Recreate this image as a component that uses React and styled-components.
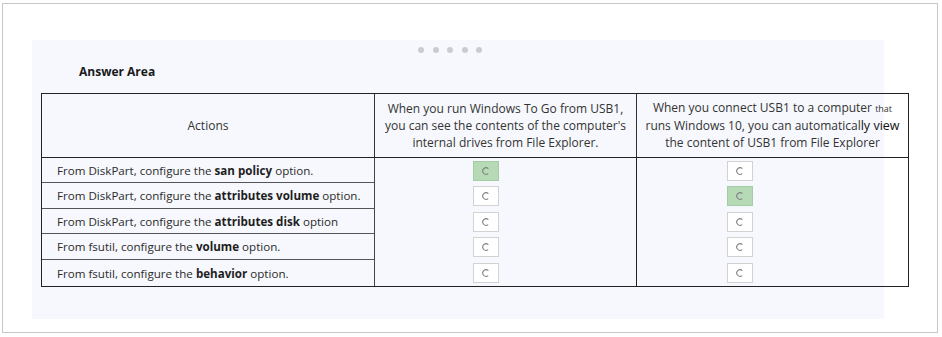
import React from 'react';
import styled, { createGlobalStyle } from 'styled-components';

const GlobalStyle = createGlobalStyle`
  html, body {
    margin: 0;
    padding: 0;
    background: #ffffff;
  }
  body {
    font-family: "Open Sans", "Noto Sans", Arial, sans-serif;
    color: #2b2b2b;
  }
`;

const rows = [
  { pre: 'From DiskPart, configure the ', bold: 'san policy', post: ' option.', pick: 0, h: 25 },
  { pre: 'From DiskPart, configure the ', bold: 'attributes volume', post: ' option.', pick: 1, h: 26 },
  { pre: 'From DiskPart, configure the ', bold: 'attributes disk', post: ' option', pick: -1, h: 25 },
  { pre: 'From fsutil, configure the ', bold: 'volume', post: ' option.', pick: -1, h: 26 },
  { pre: 'From fsutil, configure the ', bold: 'behavior', post: ' option.', pick: -1, h: 26 },
];

function App() {
  return (
    <>
      <GlobalStyle />
      <Frame>
        <Panel>
          <Dots>
            {[0, 1, 2, 3, 4].map((i) => <Dot key={i} />)}
          </Dots>
          <Title>Answer Area</Title>
          <Grid $rows={rows.map((r) => r.h + 'px').join(' ')}>
            <HeadCell>
              <HeadText>Actions</HeadText>
            </HeadCell>
            <HeadCell>
              <HeadText>
                When you run Windows To Go from USB1,<br />
                you can see the contents of the computer's<br />
                internal drives from File Explorer.
              </HeadText>
            </HeadCell>
            <HeadCell $last>
              <HeadText>
                When you connect USB1 to a computer <Tiny>that</Tiny><br />
                runs Windows 10, you can automatical<Heavy>ly view</Heavy><br />
                the content of USB1 from File Explorer
              </HeadText>
            </HeadCell>
            {rows.map((row, i) => (
              <React.Fragment key={i}>
                <ActionCell $last={i === rows.length - 1}>
                  <span>{row.pre}<b>{row.bold}</b>{row.post}</span>
                </ActionCell>
                <ChoiceCell $offset={98}>
                  <Choice $on={row.pick === 0}><RadioGlyph /></Choice>
                </ChoiceCell>
                <ChoiceCell $offset={90} $last>
                  <Choice $on={row.pick === 1}><RadioGlyph /></Choice>
                </ChoiceCell>
              </React.Fragment>
            ))}
          </Grid>
        </Panel>
      </Frame>
    </>
  );
}

function RadioGlyph() {
  return (
    <svg width="10" height="10" viewBox="0 0 10 10">
      <path d="M7.4 2.7 A3.3 3.3 0 1 0 7.2 7.6" fill="none" stroke="#808080" strokeWidth="1.1" />
    </svg>
  );
}

const Frame = styled.div`
  box-sizing: border-box;
  margin: 3px 0 0 2px;
  width: 936px;
  height: 330px;
  border: 1px solid #c8c8c8;
  padding: 36px 0 0 29px;
`;

const Panel = styled.div`
  width: 852px;
  height: 279px;
  background: #f6f8fd;
  padding-top: 7px;
  box-sizing: border-box;
  display: flex;
  flex-direction: column;
`;

const Dots = styled.div`
  display: flex;
  gap: 8.5px;
  padding-left: 386px;
  height: 6px;
`;

const Dot = styled.span`
  width: 6px;
  height: 6px;
  border-radius: 50%;
  background: #c9ccd3;
`;

const Title = styled.div`
  margin: 11px 0 0 47px;
  font-size: 12px;
  line-height: 16px;
  font-weight: 700;
  color: #1a1a1a;
`;

const Grid = styled.div`
  box-sizing: border-box;
  margin: 13px 0 0 9px;
  width: 868px;
  flex: none;
  border: 1px solid #222;
  display: grid;
  grid-template-columns: 333px 262px 271px;
  grid-template-rows: 64px ${(p) => p.$rows};
`;

const HeadCell = styled.div`
  box-sizing: border-box;
  display: flex;
  align-items: center;
  justify-content: center;
  border-bottom: 1px solid #222;
  border-right: ${(p) => (p.$last ? 'none' : '1px solid #333')};
  padding-bottom: 1px;
`;

const HeadText = styled.div`
  text-align: center;
  font-size: 12px;
  line-height: 17px;
  color: #333;
  white-space: nowrap;
`;

const Tiny = styled.span`
  font-size: 9px;
`;

const Heavy = styled.span`
  color: #111;
  font-size: 12.5px;
`;

const ActionCell = styled.div`
  box-sizing: border-box;
  display: flex;
  align-items: center;
  white-space: pre;
  padding-left: 15px;
  font-size: 11.6px;
  color: #2b2b2b;
  border-right: 1px solid #444;
  border-bottom: ${(p) => (p.$last ? 'none' : '1px solid #555')};
  b {
    font-weight: 700;
    color: #1e1e1e;
  }
`;

const ChoiceCell = styled.div`
  box-sizing: border-box;
  display: flex;
  align-items: center;
  padding-left: ${(p) => p.$offset}px;
  border-right: ${(p) => (p.$last ? 'none' : '1px solid #222')};
`;

const Choice = styled.div`
  box-sizing: border-box;
  width: 26px;
  height: 20px;
  display: flex;
  align-items: center;
  justify-content: center;
  background: ${(p) => (p.$on ? '#b6d9b6' : '#ffffff')};
  border: 1px solid ${(p) => (p.$on ? '#a6cca6' : '#d2d2d2')};
`;

export default App;
